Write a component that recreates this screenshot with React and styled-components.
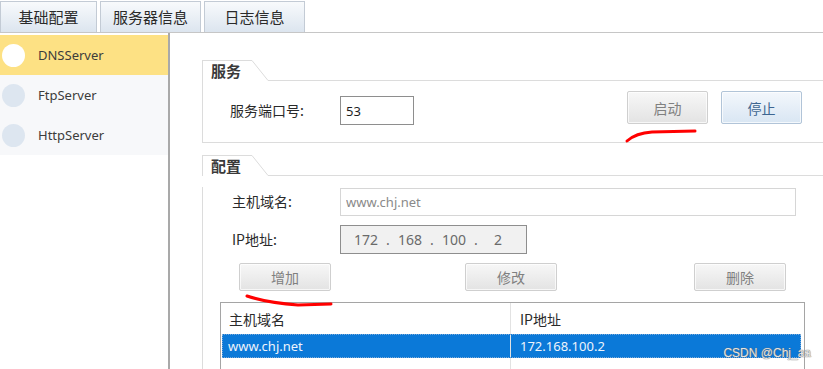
import React from "react";
import styled, { createGlobalStyle } from "styled-components";

const GlobalStyle = createGlobalStyle`
  html, body {
    margin: 0;
    padding: 0;
    background: #ffffff;
  }
  body {
    font-family: "Noto Sans", "Noto Sans CJK SC", sans-serif;
    color: #333;
  }
`;

const servers = [
  { name: "DNSServer", active: true },
  { name: "FtpServer" },
  { name: "HttpServer" },
];

function App() {
  return (
    <>
      <GlobalStyle />
      <Window>
        <TabBar>
          <Tab $width={97}>基础配置</Tab>
          <Tab $width={101}>服务器信息</Tab>
          <Tab $width={101}>日志信息</Tab>
        </TabBar>
        <Body>
          <Sidebar>
            {servers.map((s) => (
              <ServerItem key={s.name} $active={s.active}>
                <Dot $active={s.active} />
                <ServerName>{s.name}</ServerName>
              </ServerItem>
            ))}
          </Sidebar>
          <Content>
            <GroupBox>
              <GroupHead>
                <GroupTitle>服务</GroupTitle>
                <Slant viewBox="0 0 16 21" preserveAspectRatio="none">
                  <line x1="0" y1="0.5" x2="16" y2="20.5" stroke="#dcdcdc" strokeWidth="1" />
                </Slant>
                <HeadLine />
              </GroupHead>
              <Frame $height={62}>
                <ServiceRow>
                  <FieldLabel $width={110}>服务端口号:</FieldLabel>
                  <TextField $width={74} $dark readOnly value="53" />
                  <Button $offset={213}>启动</Button>
                  <Button $offset={13} $primary>停止</Button>
                </ServiceRow>
              </Frame>
            </GroupBox>

            <GroupBox $gap={12}>
              <GroupHead>
                <GroupTitle>配置</GroupTitle>
                <Slant viewBox="0 0 16 21" preserveAspectRatio="none">
                  <line x1="0" y1="0.5" x2="16" y2="20.5" stroke="#dcdcdc" strokeWidth="1" />
                </Slant>
                <HeadLine />
              </GroupHead>
              <Frame>
                <FieldRow $top={11}>
                  <FieldLabel $width={108}>主机域名:</FieldLabel>
                  <TextField $width={456} readOnly value="www.chj.net" />
                </FieldRow>
                <FieldRow $top={9}>
                  <FieldLabel $width={108}>IP地址:</FieldLabel>
                  <IpField>
                    <Octet>172</Octet>
                    <IpDot>.</IpDot>
                    <Octet>168</Octet>
                    <IpDot>.</IpDot>
                    <Octet>100</Octet>
                    <IpDot>.</IpDot>
                    <Octet>2</Octet>
                  </IpField>
                </FieldRow>
                <ActionRow>
                  <Button $wide>增加</Button>
                  <Button $wide $offset={134}>修改</Button>
                  <Button $wide $offset={137}>删除</Button>
                </ActionRow>
                <Table>
                  <HeadRow>
                    <Cell $first>主机域名</Cell>
                    <Cell>IP地址</Cell>
                  </HeadRow>
                  <DataRow $selected>
                    <Cell $first>www.chj.net</Cell>
                    <Cell>172.168.100.2</Cell>
                  </DataRow>
                  <DataRow>
                    <Cell $first />
                    <Cell />
                  </DataRow>
                </Table>
              </Frame>
            </GroupBox>
          </Content>
        </Body>

        <Marks viewBox="0 0 823 369">
          <path
            d="M627 141 Q 636 133 652 132 L 695 131"
            stroke="#ff0000"
            strokeWidth="3"
            fill="none"
            strokeLinecap="round"
          />
          <path
            d="M247 296 Q 268 303 298 305 L 331 304"
            stroke="#ff0000"
            strokeWidth="3"
            fill="none"
            strokeLinecap="round"
          />
        </Marks>
        <Watermark>CSDN @Chj_aa</Watermark>
      </Window>
    </>
  );
}

export default App;

const Window = styled.div`
  position: relative;
  width: 823px;
  height: 369px;
  overflow: hidden;
  background: #ffffff;
  display: flex;
  flex-direction: column;
`;

const TabBar = styled.div`
  display: flex;
  gap: 3px;
  height: 33px;
  padding-top: 1px;
  box-sizing: border-box;
  border-bottom: 1px solid #c6c6c6;
`;

const Tab = styled.div`
  width: ${(p) => p.$width}px;
  box-sizing: border-box;
  border: 1px solid #c3cbd5;
  border-bottom: none;
  background: linear-gradient(#f8fafc, #dce5ef);
  font-family: "Noto Sans CJK SC", sans-serif;
  font-size: 15px;
  color: #2a2a2a;
  display: flex;
  align-items: center;
  justify-content: center;
  padding-bottom: 2px;
`;

const Body = styled.div`
  flex: 1;
  display: flex;
  min-height: 0;
`;

const Sidebar = styled.div`
  width: 168px;
  flex-shrink: 0;
  border-right: 2px solid #a9a9a9;
  padding-top: 2px;
`;

const ServerItem = styled.div`
  height: 40px;
  display: flex;
  align-items: center;
  background: ${(p) => (p.$active ? "#fde184" : "#f7f8fa")};
`;

const Dot = styled.span`
  width: 23px;
  height: 23px;
  border-radius: 50%;
  margin-left: 2px;
  background: ${(p) => (p.$active ? "#ffffff" : "#dde6f0")};
`;

const ServerName = styled.span`
  margin-left: 13px;
  font-size: 13px;
  color: #3c3c3c;
`;

const Content = styled.div`
  flex: 1;
  overflow: hidden;
  padding: 27px 0 0 32px;
`;

const GroupBox = styled.div`
  width: 640px;
  margin-top: ${(p) => p.$gap || 0}px;
`;

const GroupHead = styled.div`
  display: flex;
  height: 21px;
`;

const GroupTitle = styled.div`
  width: 50px;
  box-sizing: border-box;
  border-top: 1px solid #dcdcdc;
  border-left: 1px solid #dcdcdc;
  padding-left: 8px;
  font-family: "Noto Sans CJK SC", sans-serif;
  font-weight: 700;
  font-size: 15px;
  line-height: 20px;
  color: #3a3a3a;
`;

const Slant = styled.svg`
  width: 16px;
  height: 21px;
  display: block;
`;

const HeadLine = styled.div`
  flex: 1;
  border-bottom: 1px solid #dcdcdc;
`;

const Frame = styled.div`
  border: 1px solid #dcdcdc;
  border-top: none;
  height: ${(p) => (p.$height ? `${p.$height}px` : "auto")};
  box-sizing: border-box;
`;

const ServiceRow = styled.div`
  display: flex;
  align-items: flex-start;
  padding: 10px 0 0 27px;
`;

const FieldRow = styled.div`
  display: flex;
  align-items: center;
  padding-left: 29px;
  margin-top: ${(p) => p.$top}px;
`;

const FieldLabel = styled.div`
  width: ${(p) => p.$width}px;
  flex-shrink: 0;
  font-family: "Noto Sans CJK SC", sans-serif;
  font-size: 14px;
  color: #2a2a2a;
  line-height: 29px;
  ${ServiceRow} & {
    margin-top: 5px;
  }
`;

const TextField = styled.input`
  width: ${(p) => p.$width}px;
  height: ${(p) => (p.$dark ? 29 : 28)}px;
  box-sizing: border-box;
  margin: 0;
  padding: 0 5px;
  border: 1px solid ${(p) => (p.$dark ? "#8e8e8e" : "#d6d6d6")};
  font-family: "Noto Sans", sans-serif;
  font-size: 13px;
  color: ${(p) => (p.$dark ? "#1e1e1e" : "#8a8a8a")};
  background: #ffffff;
  outline: none;
  ${ServiceRow} & {
    margin-top: 5px;
  }
`;

const IpField = styled.div`
  width: 187px;
  height: 29px;
  box-sizing: border-box;
  border: 1px solid #8e8e8e;
  background: #f1f1f1;
  display: flex;
  align-items: center;
  padding-left: 10px;
  font-size: 14px;
  color: #6a6a6a;
`;

const Octet = styled.span`
  width: 30px;
  text-align: center;
`;

const IpDot = styled.span`
  width: 14px;
  text-align: center;
`;

const Button = styled.button`
  width: ${(p) => (p.$wide ? 92 : 81)}px;
  height: ${(p) => (p.$wide ? 28 : 33)}px;
  margin: 0 0 0 ${(p) => p.$offset || 0}px;
  padding: 0;
  box-sizing: border-box;
  border: 1px solid ${(p) => (p.$primary ? "#b1c4d8" : "#cfcfcf")};
  border-radius: 2px;
  background: ${(p) =>
    p.$primary
      ? "linear-gradient(#f3f7fc, #d9e6f3)"
      : "linear-gradient(#f7f7f7, #e3e3e3)"};
  box-shadow: inset 0 0 0 1px rgba(255, 255, 255, 0.7);
  font-family: "Noto Sans CJK SC", sans-serif;
  font-size: 14px;
  color: ${(p) => (p.$primary ? "#3d6591" : "#808080")};
  flex-shrink: 0;
`;

const ActionRow = styled.div`
  display: flex;
  padding-left: 36px;
  margin-top: 9px;
`;

const Table = styled.div`
  margin: 11px 0 0 17px;
  width: 585px;
  height: 90px;
  box-sizing: border-box;
  border: 1px solid #a5a5a5;
  border-bottom: none;
  padding: 0 3px 0 1px;
`;

const HeadRow = styled.div`
  display: grid;
  grid-template-columns: 289px 1fr;
  height: 31px;
  font-family: "Noto Sans CJK SC", sans-serif;
  font-size: 14px;
  color: #2a2a2a;
`;

const DataRow = styled.div`
  display: grid;
  grid-template-columns: 289px 1fr;
  height: 24px;
  font-size: 13px;
  background: ${(p) => (p.$selected ? "#0b79d8" : "transparent")};
  color: ${(p) => (p.$selected ? "#eef4fc" : "#2a2a2a")};
  outline: ${(p) => (p.$selected ? "1px dotted #7aa9d8" : "none")};
  outline-offset: -1px;
`;

const Cell = styled.div`
  display: flex;
  align-items: center;
  padding-left: ${(p) => (p.$first ? 7 : 9)}px;
  border-right: ${(p) => (p.$first ? "1px solid #e2e2e2" : "none")};
  ${DataRow} & {
    padding-left: ${(p) => (p.$first ? 6 : 9)}px;
  }
`;

const Marks = styled.svg`
  position: absolute;
  left: 0;
  top: 0;
  width: 823px;
  height: 369px;
  pointer-events: none;
`;

const Watermark = styled.div`
  position: absolute;
  right: 12px;
  bottom: 9px;
  font-family: "Liberation Sans", sans-serif;
  font-size: 12px;
  color: #e4e4e4;
  text-shadow: 0 0 1px #6e6e6e, 0 0 1px #6e6e6e;
  pointer-events: none;
`;
